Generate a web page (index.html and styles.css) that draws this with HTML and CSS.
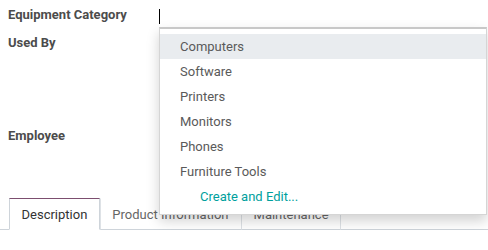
FILE: index.html
```html
<!DOCTYPE html>
<html lang="en">
<head>
  <meta charset="UTF-8">
  <title>Equipment</title>
  <link rel="stylesheet" href="styles.css">
</head>
<body>
  <div class="sheet">
    <div class="field-row row-category">
      <label class="field-label">Equipment Category</label>
      <div class="field-input">
        <div class="input-line"><span class="caret"></span></div>
        <ul class="autocomplete">
          <li class="active">Computers</li>
          <li>Software</li>
          <li>Printers</li>
          <li>Monitors</li>
          <li>Phones</li>
          <li>Furniture Tools</li>
          <li class="create">Create and Edit...</li>
        </ul>
      </div>
    </div>
    <div class="field-row row-used">
      <label class="field-label">Used By</label>
    </div>
    <div class="field-row row-employee">
      <label class="field-label">Employee</label>
    </div>

    <ul class="tabs">
      <li class="tab active">Description</li>
      <li class="tab">Product Information</li>
      <li class="tab">Maintenance</li>
    </ul>
  </div>
</body>
</html>
```

FILE: styles.css
```css
body {
  margin: 0;
  font-family: Roboto, "Noto Sans", sans-serif;
  font-size: 13px;
  color: #4c4c4c;
  background-color: #fff;
}
.sheet {
  padding-top: 5px;
}
.field-row {
  display: flex;
  padding-left: 8px;
}
.field-label {
  width: 151px;
  font-weight: bold;
  line-height: 20px;
  color: #4c4c4c;
}
.row-category {
  height: 28px;
}
.row-used {
  height: 93px;
}
.row-employee {
  height: 72px;
}
.field-input {
  position: relative;
  flex: 1;
}
.input-line {
  height: 22px;
}
.caret {
  display: block;
  width: 1px;
  height: 15px;
  margin-top: 4px;
  background-color: #000;
}
.autocomplete {
  position: absolute;
  top: 22px;
  left: 0;
  width: 326px;
  margin: 0;
  padding: 5px 0;
  list-style: none;
  background-color: #fff;
  border: 1px solid #d5d5d5;
  border-top: 2px solid #c8c8c8;
  box-shadow: 0 6px 12px rgba(0, 0, 0, 0.18);
  z-index: 10;
}
.autocomplete li {
  height: 25px;
  line-height: 25px;
  padding-left: 20px;
  color: #5a5a5a;
  white-space: nowrap;
}
.autocomplete li.active {
  background-color: #e9ecef;
}
.autocomplete li.create {
  padding-left: 40px;
  color: #00a09d;
}
.tabs {
  display: flex;
  margin: 0;
  padding: 0 0 0 9px;
  list-style: none;
  border-bottom: 1px solid #ced4da;
}
.tab {
  padding: 8px 11.5px 7px;
  line-height: 15px;
  color: #666;
  border: 1px solid transparent;
  border-left: 1px solid #dee2e6;
  margin-bottom: -1px;
}
.tab.active {
  color: #333;
  border: 1px solid #ced4da;
  border-top-color: #7c4e6f;
  border-bottom-color: #fff;
}
.tab:last-child {
  border-right: 1px solid #dee2e6;
}
```
